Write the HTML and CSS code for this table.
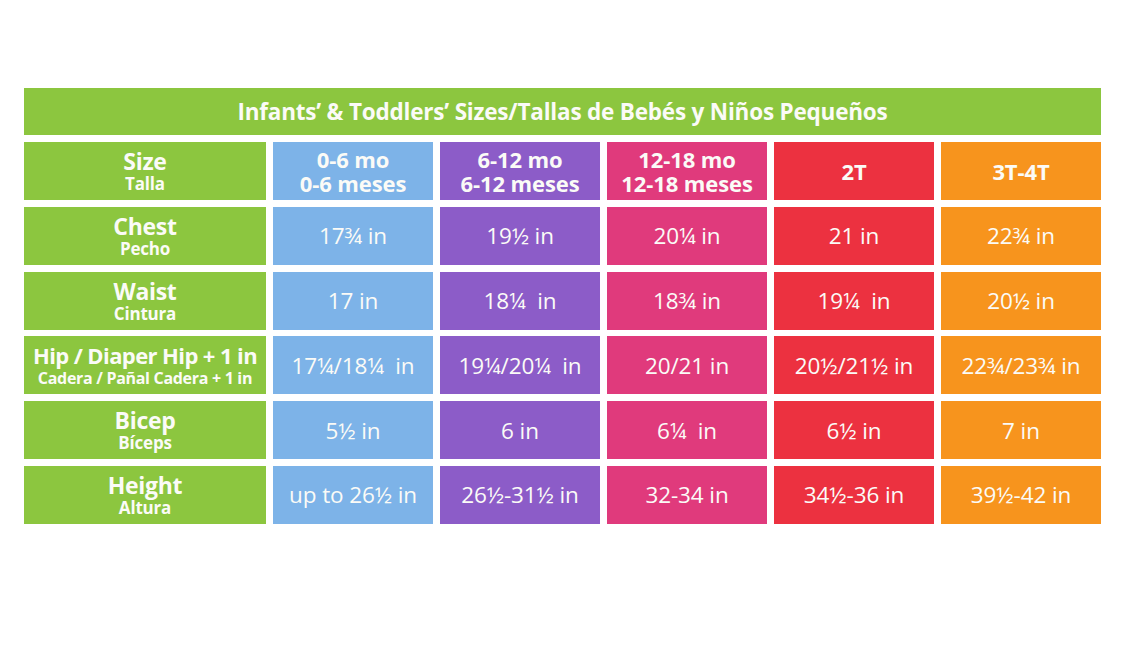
FILE: index.html
```
<!DOCTYPE html>
<html lang="es">
<head>
<meta charset="utf-8">
<title>Infants' &amp; Toddlers' Sizes</title>
<link rel="stylesheet" href="styles.css">
</head>
<body>
<div class="chart">
  <div class="title">Infants’ &amp; Toddlers’ Sizes/Tallas de Bebés y Niños Pequeños</div>
  <div class="grid">
    <div class="cell label"><span class="en">Size</span><span class="es">Talla</span></div>
    <div class="cell head blue"><span>0-6 mo</span><span>0-6 meses</span></div>
    <div class="cell head purple"><span>6-12 mo</span><span>6-12 meses</span></div>
    <div class="cell head pink"><span>12-18 mo</span><span>12-18 meses</span></div>
    <div class="cell head red"><span>2T</span></div>
    <div class="cell head orange"><span>3T-4T</span></div>

    <div class="cell label"><span class="en">Chest</span><span class="es">Pecho</span></div>
    <div class="cell val blue">17¾ in</div>
    <div class="cell val purple">19½ in</div>
    <div class="cell val pink">20¼ in</div>
    <div class="cell val red">21 in</div>
    <div class="cell val orange">22¾ in</div>

    <div class="cell label"><span class="en">Waist</span><span class="es">Cintura</span></div>
    <div class="cell val blue">17 in</div>
    <div class="cell val purple">18¼&nbsp; in</div>
    <div class="cell val pink">18¾ in</div>
    <div class="cell val red">19¼&nbsp; in</div>
    <div class="cell val orange">20½ in</div>

    <div class="cell label"><span class="en long">Hip / Diaper Hip + 1 in</span><span class="es small">Cadera / Pañal Cadera + 1 in</span></div>
    <div class="cell val blue">17¼/18¼&nbsp; in</div>
    <div class="cell val purple">19¼/20¼&nbsp; in</div>
    <div class="cell val pink">20/21 in</div>
    <div class="cell val red">20½/21½ in</div>
    <div class="cell val orange">22¾/23¾ in</div>

    <div class="cell label"><span class="en">Bicep</span><span class="es">Bíceps</span></div>
    <div class="cell val blue">5½ in</div>
    <div class="cell val purple">6 in</div>
    <div class="cell val pink">6¼&nbsp; in</div>
    <div class="cell val red">6½ in</div>
    <div class="cell val orange">7 in</div>

    <div class="cell label"><span class="en">Height</span><span class="es">Altura</span></div>
    <div class="cell val blue">up to 26½ in</div>
    <div class="cell val purple">26½-31½ in</div>
    <div class="cell val pink">32-34 in</div>
    <div class="cell val red">34½-36 in</div>
    <div class="cell val orange">39½-42 in</div>
  </div>
</div>
</body>
</html>
```
FILE: styles.css
```
html, body {
  margin: 0;
  padding: 0;
  background: #ffffff;
}
body {
  font-family: "Open Sans", "Liberation Sans", sans-serif;
  color: #fbfbf7;
}
.chart {
  width: 1077px;
  margin: 88px 0 0 24px;
  display: flex;
  flex-direction: column;
  gap: 7px;
}
.title {
  height: 47px;
  background: #8cc63f;
  display: flex;
  align-items: center;
  justify-content: center;
  font-weight: 700;
  font-size: 22.5px;
  letter-spacing: -0.2px;
}
.grid {
  display: grid;
  grid-template-columns: 242px repeat(5, 160px);
  grid-auto-rows: 58px;
  column-gap: 7px;
  row-gap: 6.8px;
}
.cell {
  display: flex;
  flex-direction: column;
  align-items: center;
  justify-content: center;
  text-align: center;
  white-space: nowrap;
}
.label { background: #8cc63f; font-weight: 700; }
.label .en { font-size: 23px; line-height: 26px; letter-spacing: -0.3px; }
.label .en.long { font-size: 22px; letter-spacing: -0.6px; }
.label .es { font-size: 17px; line-height: 20px; letter-spacing: -0.2px; }
.label .es.small { font-size: 16px; letter-spacing: -0.3px; }
.head { font-weight: 700; font-size: 22px; line-height: 24px; letter-spacing: -0.1px; }
.val { font-size: 22.5px; font-weight: 400; letter-spacing: -0.1px; }
.blue { background: #7db3e8; }
.purple { background: #8c5cc8; }
.pink { background: #e03a7c; }
.red { background: #ec3140; }
.orange { background: #f7941d; }
```
